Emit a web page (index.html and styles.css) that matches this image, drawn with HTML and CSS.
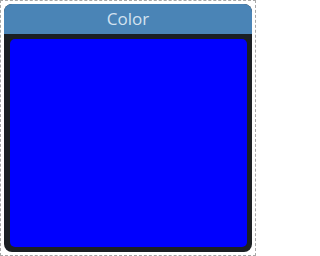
FILE: index.html
```html
<!DOCTYPE html>
<html>
<head>
<meta charset="utf-8">
<link rel="stylesheet" href="styles.css">
</head>
<body>
<div class="frame">
  <div class="card">
    <div class="card-header">Color</div>
    <div class="card-body">
      <div class="swatch"></div>
    </div>
  </div>
</div>
</body>
</html>
```
FILE: styles.css
```css
html, body {
  margin: 0;
  padding: 0;
}
.frame {
  width: 256px;
  height: 256px;
  box-sizing: border-box;
  border: 1px dashed #a8a8a8;
  padding: 3px;
  background: #ffffff;
}
.card {
  width: 248px;
  height: 248px;
  display: flex;
  flex-direction: column;
  border-radius: 8px;
  overflow: hidden;
  background: #1b1f23;
}
.card-header {
  height: 30px;
  flex: none;
  background: #4a84b6;
  color: #d3e2f0;
  font-family: "Open Sans", "Noto Sans", sans-serif;
  font-size: 17px;
  line-height: 30px;
  text-align: center;
}
.card-body {
  flex: 1;
  display: flex;
  padding: 5px 5px 5px 6px;
}
.swatch {
  flex: 1;
  background: #0000ff;
  border-radius: 5px;
}
```
